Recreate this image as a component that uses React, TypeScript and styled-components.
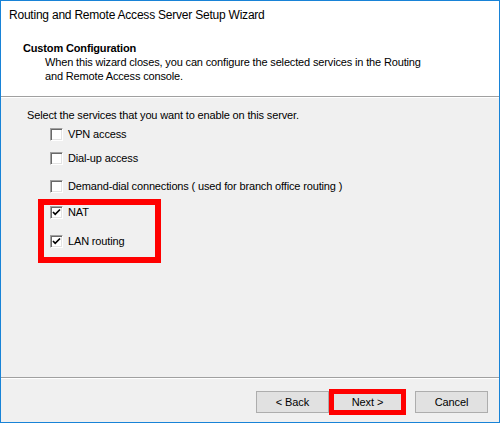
import React from "react";
import styled, { createGlobalStyle } from "styled-components";

const Global = createGlobalStyle`
  html, body { margin: 0; padding: 0; background: #ffffff; }
  * { box-sizing: border-box; }
`;

const Window = styled.div`
  width: 500px;
  height: 423px;
  border: 1px solid #1883d7;
  display: flex;
  flex-direction: column;
  background: #f0f0f0;
  font-family: "Liberation Sans", Arial, sans-serif;
  font-size: 11px;
  letter-spacing: -0.15px;
  color: #000;
  overflow: hidden;
`;

const Header = styled.div`
  height: 96px;
  background: #ffffff;
  border-bottom: 1px solid #a0a0a0;
  box-shadow: 0 1px 0 #ffffff;
  margin-bottom: 1px;
  display: flex;
  flex-direction: column;
`;

const TitleRow = styled.div`
  height: 30px;
  line-height: 29px;
  padding-left: 8px;
  font-size: 12px;
  letter-spacing: -0.22px;
`;

const Heading = styled.div`
  margin-top: 10px;
  padding-left: 22px;
  font-weight: bold;
  line-height: 14px;
`;

const Description = styled.div`
  padding-left: 44px;
  line-height: 14px;
  width: 440px;
`;

const Body = styled.div`
  position: relative;
  flex: 1;
  padding: 10px 0 0 26px;
  display: flex;
  flex-direction: column;
`;

const Intro = styled.div`
  line-height: 14px;
`;

const Row = styled.label<{ $top: number }>`
  display: flex;
  align-items: center;
  gap: 5px;
  margin-top: ${(p) => p.$top}px;
  margin-left: 23px;
  height: 14px;
  line-height: 14px;
`;

const Box = styled.span`
  width: 13px;
  height: 13px;
  background: #ffffff;
  border-top: 1px solid #a0a0a0;
  border-left: 1px solid #a0a0a0;
  border-right: 1px solid #ffffff;
  border-bottom: 1px solid #ffffff;
  box-shadow: inset 1px 1px 0 #696969, inset -1px -1px 0 #e3e3e3;
  display: flex;
  align-items: center;
  justify-content: center;
  flex: none;
`;

const Highlight = styled.div`
  position: absolute;
  left: 37px;
  top: 101px;
  width: 123px;
  height: 64px;
  border: 6px solid #ff0000;
  pointer-events: none;
`;

const Footer = styled.div`
  height: 45px;
  border-top: 1px solid #a0a0a0;
  box-shadow: inset 0 1px 0 #ffffff;
  display: flex;
  align-items: flex-start;
  justify-content: flex-end;
  padding: 13px 11px 0 0;
`;

const Button = styled.button<{ $gap?: number; $marked?: boolean }>`
  width: 73px;
  height: 22px;
  margin-left: ${(p) => p.$gap ?? 0}px;
  background: #e1e1e1;
  border: 1px solid #adadad;
  font-family: "Liberation Sans", Arial, sans-serif;
  font-size: 11px;
  letter-spacing: -0.1px;
  color: #000;
  padding: 0;
  outline: ${(p) => (p.$marked ? "5px solid #ff0000" : "none")};
  outline-offset: -3px;
`;

const Check = () => (
  <svg width="9" height="9" viewBox="0 0 9 9">
    <polyline points="1,4 3.2,6.3 8,1.5" fill="none" stroke="#000" strokeWidth="1.7" />
  </svg>
);

const items: { label: string; checked: boolean; top: number }[] = [
  { label: "VPN access", checked: false, top: 5 },
  { label: "Dial-up access", checked: false, top: 10 },
  { label: "Demand-dial connections ( used for branch office routing )", checked: false, top: 14 },
  { label: "NAT", checked: true, top: 12 },
  { label: "LAN routing", checked: true, top: 15 },
];

export default function App() {
  return (
    <>
      <Global />
      <Window>
        <Header>
          <TitleRow>Routing and Remote Access Server Setup Wizard</TitleRow>
          <Heading>Custom Configuration</Heading>
          <Description>
            When this wizard closes, you can configure the selected services in the Routing and
            Remote Access console.
          </Description>
        </Header>
        <Body>
          <Intro>Select the services that you want to enable on this server.</Intro>
          {items.map((it) => (
            <Row key={it.label} $top={it.top}>
              <Box>{it.checked && <Check />}</Box>
              <span>{it.label}</span>
            </Row>
          ))}
          <Highlight />
        </Body>
        <Footer>
          <Button>&lt; Back</Button>
          <Button $gap={2} $marked>
            Next &gt;
          </Button>
          <Button $gap={11}>Cancel</Button>
        </Footer>
      </Window>
    </>
  );
}
